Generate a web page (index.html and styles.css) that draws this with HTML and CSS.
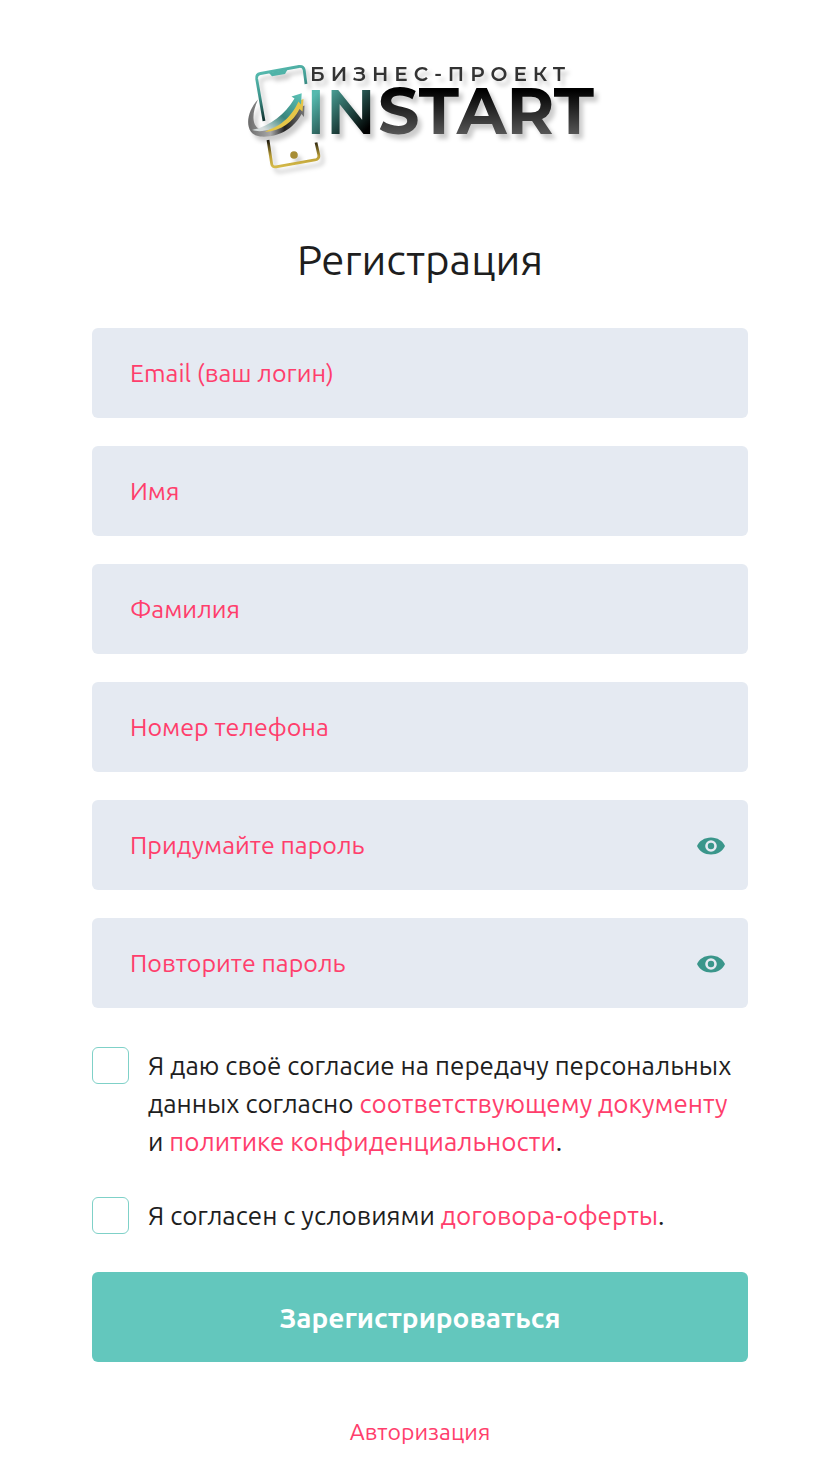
FILE: index.html
```
<!DOCTYPE html>
<html lang="ru">
<head>
    <meta charset="UTF-8">
    <meta name="viewport" content="width=device-width, initial-scale=1.0">
    <title>INSTART - Регистрация</title>
    <link rel="stylesheet" href="styles.css">
</head>
<body>
    <header>
        <svg class="logo" viewBox="0 0 360 130" role="img" aria-label="Бизнес-проект INSTART">
            <defs>
                <linearGradient id="teal" x1="0" y1="0" x2="0.3" y2="1">
                    <stop offset="0" stop-color="#5cc4b8"/>
                    <stop offset="0.5" stop-color="#3f978e"/>
                    <stop offset="1" stop-color="#0c2624"/>
                </linearGradient>
                <linearGradient id="letters" x1="0" y1="0" x2="1" y2="1">
                    <stop offset="0.2" stop-color="#55b9ae"/>
                    <stop offset="0.8" stop-color="#000"/>
                </linearGradient>
                <linearGradient id="dark" x1="0" y1="0" x2="0" y2="1">
                    <stop offset="0.25" stop-color="#000"/>
                    <stop offset="0.85" stop-color="#5e5e5e"/>
                </linearGradient>
                <linearGradient id="gold" x1="0" y1="0" x2="0" y2="1">
                    <stop offset="0" stop-color="#17140a"/>
                    <stop offset="0.6" stop-color="#b89c35"/>
                    <stop offset="1" stop-color="#d5ba49"/>
                </linearGradient>
                <linearGradient id="arrow" x1="0" y1="1" x2="1" y2="0">
                    <stop offset="0.15" stop-color="#d5dcdc"/>
                    <stop offset="0.5" stop-color="#39857d"/>
                    <stop offset="1" stop-color="#5cc4b8"/>
                </linearGradient>
                <linearGradient id="steel" x1="0" y1="0" x2="1" y2="0">
                    <stop offset="0" stop-color="#6b6b6b"/>
                    <stop offset="0.4" stop-color="#a9a9a9"/>
                    <stop offset="0.65" stop-color="#222"/>
                    <stop offset="1" stop-color="#777"/>
                </linearGradient>
            </defs>
            <g class="logo-mark">
                <path d="M24 66 L16.700 24 Q16 19.300 20.500 18.500 L59 11.500 Q63.500 11 64.200 15 L66 29" fill="none" stroke="url(#teal)" stroke-width="2.800"/>
                <path d="M29 18 L32 21.300 L45 19 L47.500 14.500 Z" fill="#4fb3a8"/>
                <path d="M28 85 L31.700 109 Q32.300 112.500 36 111.800 L75 105 Q79.500 104 78.800 100 L76 87.500" fill="none" stroke="url(#gold)" stroke-width="2.800"/>
                <circle cx="54" cy="100" r="3.800" fill="#a78d35"/>
                <path d="M18 44.500 C5 58 4 80 20 81.500 C39 83 54 73 61.500 59 L64 62 L64.500 50.500 L55 54 L57 56 C47 67 35 74 24 75 C13 75 10 62 18 44.500 Z" fill="url(#steel)"/>
                <path d="M25 77 C41 76 53 67 59.500 54 L62.500 56.500 L63.500 44 L54 48 C48 60 38 70 25 77 Z" fill="#e5c548"/>
                <path d="M12 75 C28 80 49 68 58.500 46.500 L61 49.500 L61.700 38.300 L51.500 41.500 L54.500 43.500 C45 59 31 71 12 75 Z" fill="url(#arrow)"/>
            </g>
            <text class="logo-sub" x="70" y="26">БИЗНЕС-ПРОЕКТ</text>
            <text class="logo-in" x="66" y="79" fill="url(#letters)">IN</text>
            <text class="logo-start" x="138" y="79" fill="url(#dark)">START</text>
        </svg>
    </header>

    <main>
        <h1>Регистрация</h1>

        <form id="registerForm">
            <div class="field">
                <input type="email" id="email" placeholder="Email (ваш логин)" aria-label="Email (ваш логин)">
            </div>
            <div class="field">
                <input type="text" id="name" placeholder="Имя" aria-label="Имя">
            </div>
            <div class="field">
                <input type="text" id="surname" placeholder="Фамилия" aria-label="Фамилия">
            </div>
            <div class="field">
                <input type="tel" id="phone" placeholder="Номер телефона" aria-label="Номер телефона">
            </div>
            <div class="field">
                <input type="password" id="password" placeholder="Придумайте пароль" aria-label="Придумайте пароль">
                <button type="button" class="eye" aria-label="Показать пароль" onclick="togglePassword('password')">
                    <svg viewBox="0 0 28 18"><path fill-rule="evenodd" d="M0 9 C2.200 4 7.600 0.500 14 0.500 S25.800 4 28 9 C25.800 14 20.400 17.500 14 17.500 S2.200 14 0 9 Z M14 3.200 A5.800 5.800 0 1 0 14 14.800 A5.800 5.800 0 1 0 14 3.200 Z M14 5.800 A3.200 3.200 0 1 1 14 12.200 A3.200 3.200 0 1 1 14 5.800 Z"/></svg>
                </button>
            </div>
            <div class="field">
                <input type="password" id="repeat" placeholder="Повторите пароль" aria-label="Повторите пароль">
                <button type="button" class="eye" aria-label="Показать пароль" onclick="togglePassword('repeat')">
                    <svg viewBox="0 0 28 18"><path fill-rule="evenodd" d="M0 9 C2.200 4 7.600 0.500 14 0.500 S25.800 4 28 9 C25.800 14 20.400 17.500 14 17.500 S2.200 14 0 9 Z M14 3.200 A5.800 5.800 0 1 0 14 14.800 A5.800 5.800 0 1 0 14 3.200 Z M14 5.800 A3.200 3.200 0 1 1 14 12.200 A3.200 3.200 0 1 1 14 5.800 Z"/></svg>
                </button>
            </div>

            <div class="agree">
                <input type="checkbox" id="personal">
                <label for="personal">Я даю своё согласие на передачу персональных данных согласно <a href="#">соответствующему документу</a> и&nbsp;<a href="#">политике конфиденциальности</a>.</label>
            </div>
            <div class="agree">
                <input type="checkbox" id="offer">
                <label for="offer">Я согласен с условиями <a href="#">договора-оферты</a>.</label>
            </div>

            <button type="submit" class="submit">Зарегистрироваться</button>
        </form>

        <a class="login-link" href="#">Авторизация</a>
    </main>

    <script>
        function togglePassword(id) {
            const input = document.getElementById(id);
            input.type = input.type === 'password' ? 'text' : 'password';
        }
    </script>
</body>
</html>
```
FILE: styles.css
```
* {
    margin: 0;
    padding: 0;
    box-sizing: border-box;
}

body {
    font-family: "Ubuntu", "Noto Sans", sans-serif;
    font-size: 26px;
    color: #1e1e1e;
    background-color: #fff;
    padding: 55px 69px 16px 92px;
}

header {
    display: flex;
    justify-content: center;
}

.logo {
    width: 360px;
    height: 130px;
    filter: drop-shadow(4px 5px 2px rgba(0, 0, 0, 0.2));
}

.logo text {
    font-family: "Montserrat", "Inter", sans-serif;
}

.logo-sub {
    font-size: 20px;
    font-weight: 600;
    letter-spacing: 6px;
    fill: #333;
}

.logo-in {
    font-size: 62px;
    font-weight: 600;
}

.logo-start {
    font-size: 65px;
    font-weight: 700;
}

h1 {
    font-size: 42px;
    font-weight: 400;
    line-height: 56px;
    text-align: center;
    margin: 47px 0 40px;
}

.field {
    position: relative;
    margin-bottom: 28px;
}

.field input {
    display: block;
    width: 100%;
    height: 90px;
    padding: 0 38px;
    border: none;
    border-radius: 6px;
    background-color: #e5eaf2;
    font-family: inherit;
    font-size: 25px;
    color: #1e1e1e;
}

.field input[type="password"] {
    padding-right: 70px;
}

.field input::placeholder {
    color: #ff3e6c;
    opacity: 1;
}

.eye {
    position: absolute;
    top: 0;
    right: 16px;
    width: 42px;
    height: 92px;
    display: flex;
    align-items: center;
    justify-content: center;
    border: none;
    background: none;
    cursor: pointer;
}

.eye svg {
    width: 28px;
    height: 18px;
    fill: #3a968b;
}

.agree {
    display: flex;
    align-items: flex-start;
    gap: 19px;
    margin-top: 39px;
    line-height: 38px;
}

.agree + .agree {
    margin-top: 36px;
}

.agree input {
    appearance: none;
    flex: none;
    width: 37px;
    height: 37px;
    border: 1px solid #7fd1c8;
    border-radius: 6px;
    background-color: #fff;
    cursor: pointer;
}

.agree input:checked {
    background-color: #63c7bd;
}

a {
    color: #ff3e6c;
    text-decoration: none;
}

a:hover {
    text-decoration: underline;
}

.submit {
    width: 100%;
    height: 90px;
    margin-top: 37px;
    border: none;
    border-radius: 6px;
    background-color: #63c7bd;
    color: #fff;
    font-family: inherit;
    font-size: 28px;
    font-weight: 600;
    cursor: pointer;
}

.submit:hover {
    background-color: #50b5ab;
}

.login-link {
    display: block;
    width: fit-content;
    margin: 54px auto 0;
    font-size: 23px;
    line-height: 32px;
}
```
